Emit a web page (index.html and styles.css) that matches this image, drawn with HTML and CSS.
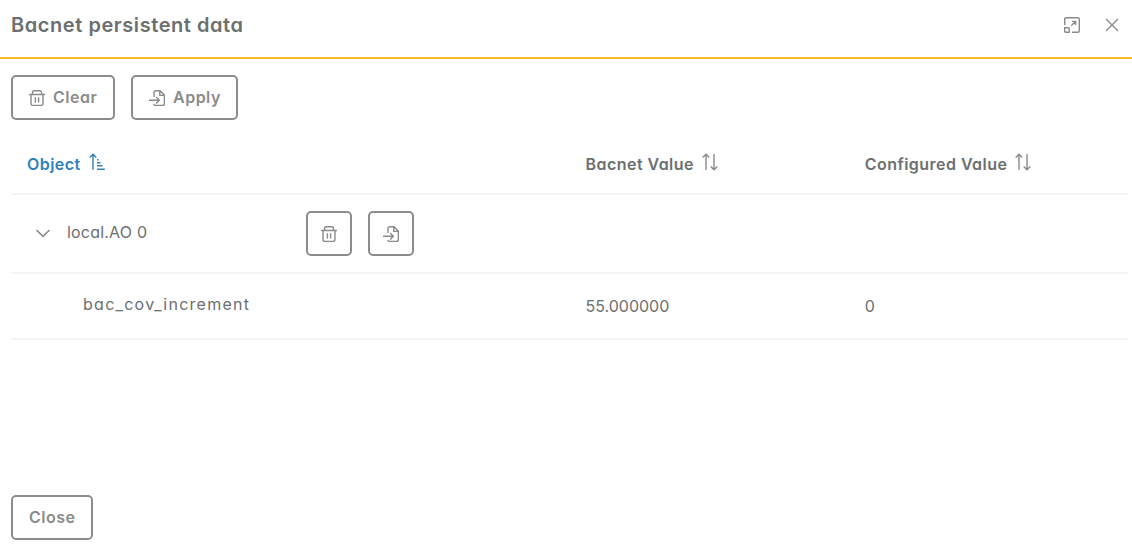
FILE: index.html
```html
<!DOCTYPE html>
<html lang="en">
<head>
    <meta charset="utf-8">
    <title>Bacnet persistent data</title>
    <link rel="stylesheet" href="styles.css">
</head>
<body>
    <!-- Icon shapes -->
    <svg class="sprite">
        <symbol id="trash" viewBox="0 0 16 16">
            <path d="M0 4.5H16M3.5 4.5V2.4Q3.5 .7 5.2 .7H10.8Q12.5 .7 12.5 2.4V4.5M2 4.5V13.5Q2 15.4 3.9 15.4H12.1Q14 15.4 14 13.5V4.5M6.4 7.2V12.5M9.6 7.2V12.5"/>
        </symbol>
        <symbol id="apply" viewBox="0 0 16 16">
            <path d="M5 7V2.5Q5 .7 6.8 .7H11L15.4 5.2V13.6Q15.4 15.4 13.6 15.4H6.8Q5.2 15.4 5 13.8M10.8 .9V5.4H15.2M0 10.2H10M7.2 7L10.3 10.2L7.2 13.4"/>
        </symbol>
        <symbol id="sort" viewBox="0 0 16 18">
            <path d="M4 17V1.3M.7 4.5L4 1.2L7.3 4.5M12 1V16.7M8.7 13.5L12 16.8L15.3 13.5"/>
        </symbol>
    </svg>

    <div class="dialog">
        <div class="dialog-header">
            <h2 class="title">Bacnet persistent data</h2>
            <div class="header-icons">
                <svg class="icon" viewBox="0 0 16 16"><path d="M.7 8V2.2Q.7 .7 2.2 .7H13.8Q15.3 .7 15.3 2.2V13.8Q15.3 15.3 13.8 15.3H8M.7 10.8H4.2Q5.2 10.8 5.2 11.8V15.3H1.7Q.7 15.3 .7 14.3ZM7.4 8.6L11.6 4.4M8 4.4H11.6V8"/></svg>
                <svg class="icon" viewBox="0 0 16 16"><path d="M2 2L14 14M14 2L2 14"/></svg>
            </div>
        </div>

        <div class="dialog-body">
            <div class="toolbar">
                <button class="button clear"><svg class="icon"><use href="#trash"/></svg><span>Clear</span></button>
                <button class="button apply"><svg class="icon"><use href="#apply"/></svg><span>Apply</span></button>
            </div>

            <div class="table">
                <div class="row head">
                    <div class="cell sorted">
                        <span>Object</span>
                        <svg class="sort-icon" viewBox="0 0 16 18"><path d="M4 16.8V1.3M.7 4.5L4 1.2L7.3 4.5M8 6.7H9.5M8 9.7H11.5M8 12.7H13.5M8 16.2H15.8"/></svg>
                    </div>
                    <div class="cell">
                        <span>Bacnet Value</span>
                        <svg class="sort-icon"><use href="#sort"/></svg>
                    </div>
                    <div class="cell">
                        <span>Configured Value</span>
                        <svg class="sort-icon"><use href="#sort"/></svg>
                    </div>
                </div>
                <div class="row parent">
                    <div class="cell">
                        <svg class="chevron" viewBox="0 0 16 16"><path d="M1.5 5L8 11.3L14.5 5"/></svg>
                        <span class="name">local.AO 0</span>
                        <button class="button small"><svg class="icon"><use href="#trash"/></svg></button>
                        <button class="button small"><svg class="icon"><use href="#apply"/></svg></button>
                    </div>
                    <div class="cell"></div>
                    <div class="cell"></div>
                </div>
                <div class="row child">
                    <div class="cell"><span class="property">bac_cov_increment</span></div>
                    <div class="cell">55.000000</div>
                    <div class="cell">0</div>
                </div>
            </div>
        </div>

        <div class="dialog-footer">
            <button class="button close"><span>Close</span></button>
        </div>
    </div>
</body>
</html>
```
FILE: styles.css
```css
* {
    box-sizing: border-box;
}
body {
    margin: 0;
    background: #fff;
    color: #6c6f70;
    font-family: Inter, "Liberation Sans", sans-serif;
    font-feature-settings: "cv11";
    font-size: 16px;
    line-height: 24px;
}
.sprite {
    display: none;
}
svg {
    flex: none;
    fill: none;
    stroke: #8a8a8a;
    stroke-width: 1.4;
}
.icon {
    width: 16px;
    height: 16px;
}
.dialog {
    display: flex;
    flex-direction: column;
    height: 549px;
}
.dialog-header {
    display: flex;
    justify-content: space-between;
    height: 59px;
    padding: 10px 12px 0 11px;
    border-bottom: 2px solid #fdb924;
}
.title {
    margin: 0;
    font-size: 20px;
    font-weight: 600;
    line-height: 30px;
    white-space: nowrap;
    letter-spacing: 0.56px;
}
.header-icons {
    display: flex;
    gap: 24px;
    padding-top: 7px;
}
.dialog-body {
    flex: 1;
    padding: 16px 4px 0 11px;
}
.toolbar {
    display: flex;
    gap: 16px;
}
.button {
    display: flex;
    align-items: center;
    justify-content: flex-start;
    gap: 8px;
    height: 45px;
    padding: 0 16px;
    border: 2px solid #8c8c8c;
    border-radius: 5px;
    background: #fff;
    color: #8a8b8b;
    font: inherit;
    font-weight: 600;
    letter-spacing: 0.5px;
    white-space: nowrap;
}
.button span {
    margin-bottom: 2px;
}
.clear {
    width: 104px;
}
.apply {
    width: 107px;
}
.close {
    width: 82px;
}
.small {
    justify-content: center;
    width: 46px;
    padding: 0;
}
.row {
    display: grid;
    grid-template-columns: 2fr 1fr 1fr;
    border-bottom: 2px solid #f5f5f5;
}
.cell {
    display: flex;
    align-items: center;
    padding: 0 16px;
    white-space: nowrap;
}
.head {
    height: 61px;
    margin-top: 14px;
    font-weight: 600;
    letter-spacing: 0.46px;
}
.sort-icon {
    width: 16px;
    height: 18px;
    margin: 0 0 3px 8px;
}
.sorted {
    color: #2f81bd;
}
.sorted .sort-icon {
    stroke: #2f81bd;
}
.parent {
    height: 79px;
}
.chevron {
    width: 16px;
    height: 16px;
    margin: 0 16px 1px 8px;
    stroke-width: 1.6;
}
.name {
    width: 239px;
    margin-bottom: 4px;
    letter-spacing: 0.2px;
}
.small + .small {
    margin-left: 16px;
}
.child {
    height: 66px;
}
.property {
    margin: 0 0 4px 56px;
    letter-spacing: 1.28px;
}
.dialog-footer {
    height: 54px;
    padding-left: 11px;
}
```
